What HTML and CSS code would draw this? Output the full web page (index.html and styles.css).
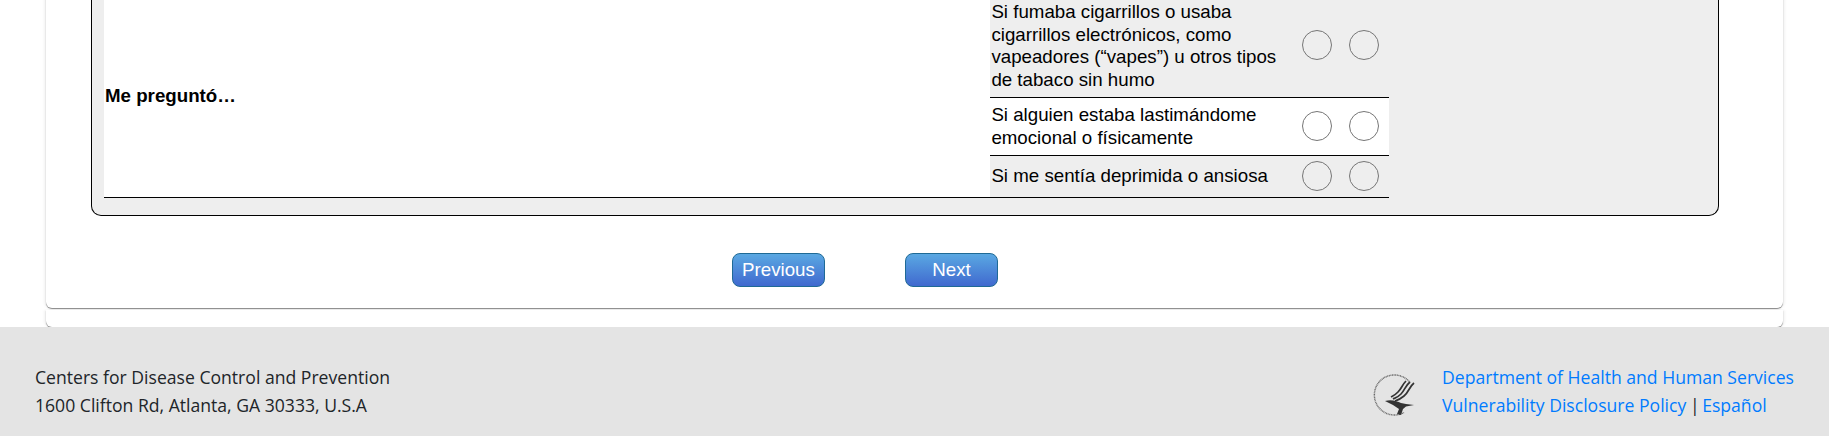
FILE: index.html
```html
<!DOCTYPE html>
<html lang="es">
<head>
  <meta charset="UTF-8" />
  <meta name="viewport" content="width=device-width, initial-scale=1.0"/>
  <title>Encuesta</title>
  <link rel="stylesheet" href="styles.css">
</head>
<body>
  <main class="survey">
    <div class="card">
      <fieldset class="panel">
        <table class="grid">
          <tr class="shaded">
            <th class="topic" rowspan="3">Me preguntó…</th>
            <td class="question">Si fumaba cigarrillos o usaba cigarrillos electrónicos, como vapeadores (“vapes”) u otros tipos de tabaco sin humo</td>
            <td class="choice"><input type="radio" name="q1" aria-label="Sí"></td>
            <td class="choice"><input type="radio" name="q1" aria-label="No"></td>
          </tr>
          <tr>
            <td class="question">Si alguien estaba lastimándome emocional o físicamente</td>
            <td class="choice"><input type="radio" name="q2" aria-label="Sí"></td>
            <td class="choice"><input type="radio" name="q2" aria-label="No"></td>
          </tr>
          <tr class="shaded">
            <td class="question">Si me sentía deprimida o ansiosa</td>
            <td class="choice"><input type="radio" name="q3" aria-label="Sí"></td>
            <td class="choice"><input type="radio" name="q3" aria-label="No"></td>
          </tr>
        </table>
      </fieldset>
      <div class="actions">
        <button type="button" class="btn">Previous</button>
        <button type="button" class="btn">Next</button>
      </div>
    </div>
    <div class="card card-thin"></div>
  </main>

  <footer class="site-footer">
    <div class="address">
      <div>Centers for Disease Control and Prevention</div>
      <div>1600 Clifton Rd, Atlanta, GA 30333, U.S.A</div>
    </div>
    <div class="agency">
      <svg class="hhs-logo" viewBox="12 8 48 46" aria-hidden="true">
        <path class="ring" d="M51 19.5A20 20 0 1 0 45 49.5"/>
        <path class="wing" d="M55 20C50 24 50 29 45 33S39 37 36 38"/>
        <path class="wing" d="M51 19C46 23 46 27 42 31S36 35 34 36"/>
        <path class="wing" d="M47 18C43 22 43 25 39 29S34 33 32 34"/>
        <path class="body" d="M26 38C32 36 38 38 42 40L47 41 55 42 47 43.500 44 46 42 52 38 51 40 46 34 42Z"/>
      </svg>
      <div class="agency-links">
        <div><a href="#">Department of Health and Human Services</a></div>
        <div><a href="#">Vulnerability Disclosure Policy</a> <span class="sep">|</span> <a href="#">Español</a></div>
      </div>
    </div>
  </footer>
</body>
</html>
```

FILE: styles.css
```css
html, body {
  margin: 0;
  height: 436px;
  overflow: hidden;
  background: #fff;
}

.survey {
  margin: -5px 46px 0;
}

.card {
  background: #fff;
  border-radius: 0 0 6px 6px;
  box-shadow: 0 1px 1px rgba(0, 0, 0, 0.45), 2px 0 3px rgba(0, 0, 0, 0.05), -2px 0 3px rgba(0, 0, 0, 0.05);
  padding: 0 64px 21px 45px;
}

.card-thin {
  height: 17px;
  margin-top: 2px;
  padding: 0;
}

.panel {
  margin: 0;
  padding: 0 12px 17px;
  border: 1px solid #000;
  border-top: 0;
  border-radius: 0 0 10px 10px;
  background: #eee;
}

.grid {
  width: 1285px;
  border-collapse: collapse;
  font-family: "Liberation Sans", Arial, sans-serif;
  font-size: 18.72px;
  line-height: 22.5px;
  color: #000;
}

.topic {
  width: 886px;
  padding: 0 1px;
  background: #fff;
  border-bottom: 1px solid #000;
  text-align: left;
  font-weight: bold;
}

.question {
  padding: 6px 2px 6px 1px;
  width: 302px;
  border-bottom: 1px solid #000;
}

.choice {
  width: 30px;
  padding: 4.5px 10px 6.5px 7px;
  border-bottom: 1px solid #000;
}

.shaded {
  background: #eee;
}

tr:not(.shaded) {
  background: #fff;
}

.choice input {
  appearance: none;
  display: block;
  box-sizing: border-box;
  width: 30px;
  height: 30px;
  margin: 0;
  border: 1.5px solid #767676;
  border-radius: 50%;
  background: transparent;
}

.actions {
  display: flex;
  gap: 80px;
  padding: 37px 0 0 641px;
}

.btn {
  width: 93px;
  height: 34px;
  padding: 0;
  border: 1px solid #1f6a96;
  border-radius: 8px;
  background: linear-gradient(#5aa8e2, #4069cf);
  color: #fff;
  font-family: "Liberation Sans", Arial, sans-serif;
  font-size: 18.72px;
}

.site-footer {
  display: flex;
  justify-content: space-between;
  align-items: flex-start;
  height: 120px;
  box-sizing: border-box;
  padding: 36px 35px 0;
  background: #e4e4e4;
  font-family: "Open Sans", sans-serif;
  font-size: 17.6px;
  line-height: 28px;
  color: #212529;
}

.agency {
  display: flex;
  gap: 23px;
}

.hhs-logo {
  width: 48px;
  height: 46px;
  margin-top: 8px;
}

.ring {
  fill: none;
  stroke: #666;
  stroke-width: 1.4;
  stroke-dasharray: 1 .6;
}

.wing {
  fill: none;
  stroke: #333;
  stroke-width: 1.7;
}

.body {
  fill: #333;
}

.agency-links a {
  color: #007bff;
  text-decoration: none;
}

.sep {
  margin: 0 -2px 0 -1px;
}
```
